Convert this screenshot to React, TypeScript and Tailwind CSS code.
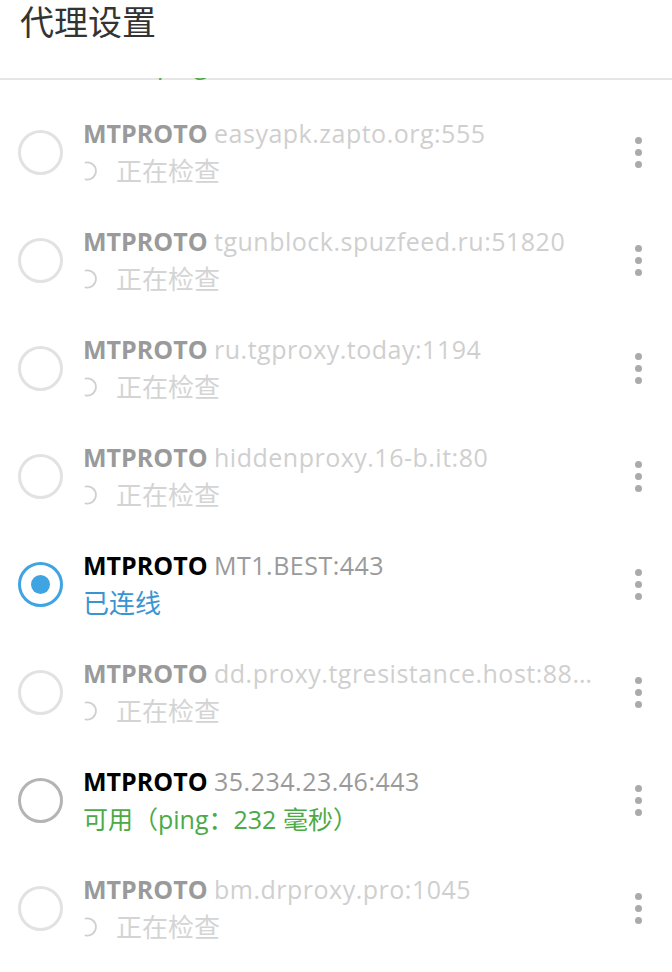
import { useMemo } from 'react';

type Status = 'checking' | 'connected' | 'available';

interface Proxy {
  host: string;
  status: Status;
  ping?: number;
}

const proxies: Proxy[] = [
  { host: 'easyapk.zapto.org:555', status: 'checking' },
  { host: 'tgunblock.spuzfeed.ru:51820', status: 'checking' },
  { host: 'ru.tgproxy.today:1194', status: 'checking' },
  { host: 'hiddenproxy.16-b.it:80', status: 'checking' },
  { host: 'MT1.BEST:443', status: 'connected' },
  { host: 'dd.proxy.tgresistance.host:8888', status: 'checking' },
  { host: '35.234.23.46:443', status: 'available', ping: 232 },
  { host: 'bm.drproxy.pro:1045', status: 'checking' }
];

const font = { fontFamily: '"Open Sans", "Noto Sans CJK SC", sans-serif' };

function Spinner() {
  // open arc, like a "つ"
  return (
    <svg width="14" height="22" viewBox="0 0 14 22" className="shrink-0">
      <path
        d="M2.5 2.6 A8.6 8.6 0 1 1 2.5 19.4"
        fill="none"
        stroke="#d0d0d0"
        strokeWidth="1.8"
        strokeLinecap="round"
      />
    </svg>
  );
}

function Radio({ status }: { status: Status }) {
  if (status === 'connected') {
    return (
      <div className="w-[45px] h-[45px] rounded-full border-[3px] border-[#41a4e2] flex items-center justify-center shrink-0">
        <div className="w-[19px] h-[19px] rounded-full bg-[#41a4e2]" />
      </div>
    );
  }
  const border = status === 'available' ? 'border-[#b4b4b4]' : 'border-[#e2e2e2]';
  return <div className={`w-[45px] h-[45px] rounded-full border-[3px] ${border} shrink-0`} />;
}

function MenuDots() {
  return (
    <div className="w-[68px] shrink-0 flex flex-col items-center gap-[5px]">
      <span className="w-[7px] h-[7px] rounded-full bg-[#aaaaaa]" />
      <span className="w-[7px] h-[7px] rounded-full bg-[#aaaaaa]" />
      <span className="w-[7px] h-[7px] rounded-full bg-[#aaaaaa]" />
    </div>
  );
}

function ProxyRow({ proxy }: { proxy: Proxy }) {
  const active = proxy.status !== 'checking';
  return (
    <div className="h-[108px] flex items-center pl-[18px]">
      <Radio status={proxy.status} />
      <div className="flex-1 min-w-0 ml-[20px] mr-[8px]">
        <div className={`truncate text-[25px] leading-[32px] ${active ? 'text-[#9a9a9a]' : 'text-[#cfcfcf]'}`}>
          <span className={`font-bold ${active ? 'text-black' : 'text-[#9a9a9a]'}`}>MTPROTO</span>{' '}
          <span className="tracking-[0.5px]">{proxy.host}</span>
        </div>
        <div className="mt-[5px] text-[26px] leading-[34px] flex items-center">
          {proxy.status === 'checking' && (
            <>
              <Spinner />
              <span className="ml-[19px] text-[#d4d4d4]">正在检查</span>
            </>
          )}
          {proxy.status === 'connected' && <span className="text-[#3b94d2]">已连线</span>}
          {proxy.status === 'available' && (
            <span className="text-[#4caa46] text-[25px]">可用（ping：{proxy.ping} 毫秒）</span>
          )}
        </div>
      </div>
      <MenuDots />
    </div>
  );
}

export default function App() {
  const rows = useMemo(() => proxies, []);
  return (
    <div className="w-[672px] h-[972px] bg-white overflow-hidden" style={font}>
      <div className="h-[78px] pl-[20px]">
        <h1 className="text-[34px] leading-[44px] text-[#333333] font-normal">代理设置</h1>
      </div>
      <div className="h-[2px] bg-[#e6e6e6] overflow-hidden pl-[157px]">
        <div className="-mt-[30px] text-[25px] leading-[32px] text-[#4caa46]" style={{ fontFamily: '"Open Sans", sans-serif' }}>
          ping
        </div>
      </div>
      <div className="pt-[18px]">
        {rows.map((p, i) => (
          <ProxyRow key={i} proxy={p} />
        ))}
      </div>
    </div>
  );
}
